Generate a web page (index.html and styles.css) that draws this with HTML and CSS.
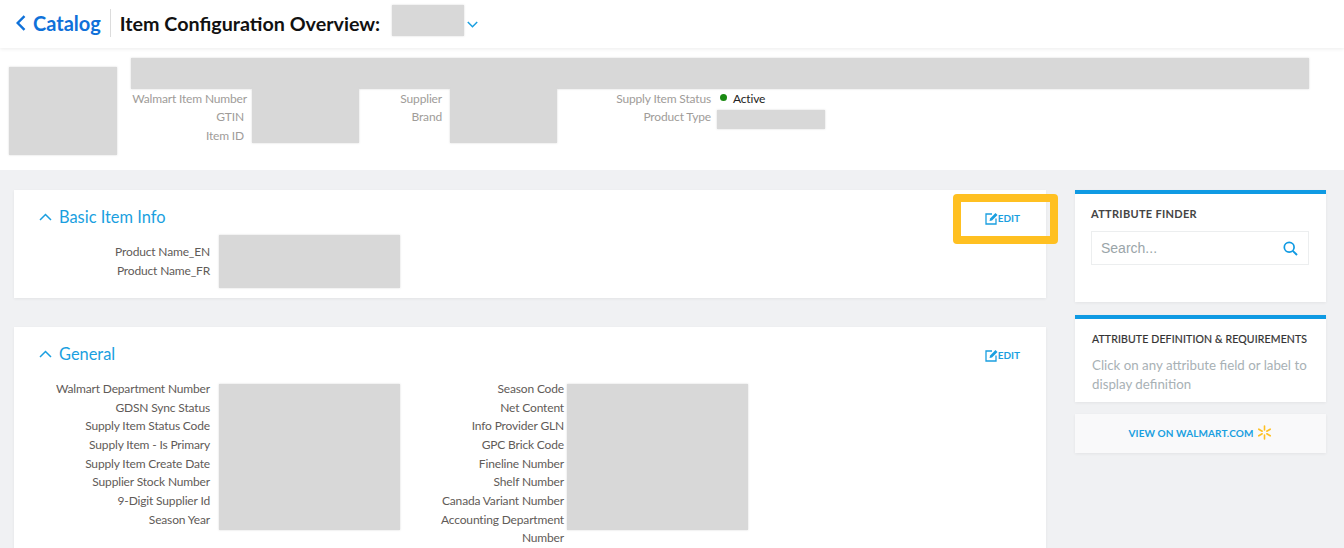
FILE: index.html
```html
<!DOCTYPE html>
<html lang="en">
<head>
    <meta charset="UTF-8">
    <title>Item Configuration Overview</title>
    <link rel="stylesheet" href="styles.css">
</head>
<body>
    <div class="topbar">
        <a class="back">
            <svg class="back-icon" width="10" height="16" viewBox="0 0 10 16"><path d="M8.5 1.2 1.7 8l6.8 6.8" fill="none" stroke="#0f71d9" stroke-width="2.4"/></svg>
            Catalog
        </a>
        <h1 class="page-title">Item Configuration Overview:</h1>
        <div class="redact redact-select"></div>
        <svg class="select-icon" width="11" height="7" viewBox="0 0 11 7"><path d="M.8 1 5.5 5.7 10.2 1" fill="none" stroke="#1a9fe0" stroke-width="1.5"/></svg>
    </div>

    <div class="product">
        <div class="redact redact-image"></div>
        <div class="product-info">
            <div class="redact redact-name"></div>
            <div class="meta">
                <div class="meta-group meta-first">
                    <div class="meta-labels">
                        <p>Walmart Item Number</p>
                        <p class="inset">GTIN</p>
                        <p class="inset">Item ID</p>
                    </div>
                    <div class="redact redact-meta"></div>
                </div>
                <div class="meta-group meta-second">
                    <div class="meta-labels">
                        <p>Supplier</p>
                        <p>Brand</p>
                    </div>
                    <div class="redact redact-meta"></div>
                </div>
                <div class="meta-group meta-third">
                    <div class="meta-labels">
                        <p>Supply Item Status</p>
                        <p>Product Type</p>
                    </div>
                    <div class="meta-values">
                        <p class="status"><span class="dot"></span>Active</p>
                        <div class="redact redact-type"></div>
                    </div>
                </div>
            </div>
        </div>
    </div>

    <div class="content">
        <div class="main">
            <div class="card card-basic">
                <div class="card-head">
                    <svg class="toggle" width="13" height="8" viewBox="0 0 13 8"><path d="M1 7 6.500 1.500 12 7" fill="none" stroke="#1a9fe0" stroke-width="1.500"/></svg>
                    <h2>Basic Item Info</h2>
                    <a class="edit">
                        <svg width="13" height="13" viewBox="0 0 13 13"><path d="M7 2H1v10h10V6.500" fill="none" stroke="#1a9fe0" stroke-width="1.300"/><path d="M4.500 9l.6-2.600L10.500.9l2 2L7 8.400z" fill="#1a9fe0"/></svg>
                        EDIT
                    </a>
                </div>
                <div class="fields">
                    <div class="labels">
                        <p>Product Name_EN</p>
                        <p>Product Name_FR</p>
                    </div>
                    <div class="redact redact-basic"></div>
                </div>
                <div class="highlight"></div>
            </div>

            <div class="card card-general">
                <div class="card-head">
                    <svg class="toggle" width="13" height="8" viewBox="0 0 13 8"><path d="M1 7 6.500 1.500 12 7" fill="none" stroke="#1a9fe0" stroke-width="1.500"/></svg>
                    <h2>General</h2>
                    <a class="edit">
                        <svg width="13" height="13" viewBox="0 0 13 13"><path d="M7 2H1v10h10V6.500" fill="none" stroke="#1a9fe0" stroke-width="1.300"/><path d="M4.500 9l.6-2.600L10.500.9l2 2L7 8.400z" fill="#1a9fe0"/></svg>
                        EDIT
                    </a>
                </div>
                <div class="fields">
                    <div class="labels">
                        <p>Walmart Department Number</p>
                        <p>GDSN Sync Status</p>
                        <p>Supply Item Status Code</p>
                        <p>Supply Item - Is Primary</p>
                        <p>Supply Item Create Date</p>
                        <p>Supplier Stock Number</p>
                        <p>9-Digit Supplier Id</p>
                        <p>Season Year</p>
                    </div>
                    <div class="redact redact-general"></div>
                    <div class="labels labels-second">
                        <p>Season Code</p>
                        <p>Net Content</p>
                        <p>Info Provider GLN</p>
                        <p>GPC Brick Code</p>
                        <p>Fineline Number</p>
                        <p>Shelf Number</p>
                        <p>Canada Variant Number</p>
                        <p>Accounting Department Number</p>
                    </div>
                    <div class="redact redact-general redact-tight"></div>
                </div>
            </div>
        </div>

        <div class="side">
            <div class="panel panel-finder">
                <h3>ATTRIBUTE FINDER</h3>
                <div class="search">
                    <input type="text" placeholder="Search...">
                    <svg width="15" height="15" viewBox="0 0 15 15"><circle cx="6.200" cy="6.200" r="4.900" fill="none" stroke="#0f9ae3" stroke-width="1.700"/><path d="M9.800 9.800 14 14" stroke="#0f9ae3" stroke-width="1.900"/></svg>
                </div>
            </div>
            <div class="panel panel-def">
                <h3>ATTRIBUTE DEFINITION &amp; REQUIREMENTS</h3>
                <p>Click on any attribute field or label to display definition</p>
            </div>
            <a class="view-link">
                VIEW ON WALMART.COM
                <svg width="15" height="15" viewBox="0 0 15 15"><path d="M7.500 1v4M7.500 10v4M1.800 4.200l3.400 2M9.800 8.800l3.400 2M1.800 10.800l3.400-2M9.800 6.200l3.400-2" stroke="#ffc021" stroke-width="1.600" stroke-linecap="round"/></svg>
            </a>
        </div>
    </div>
</body>
</html>
```

FILE: styles.css
```css
* { margin: 0; padding: 0; box-sizing: border-box; }

html, body { height: 100%; overflow: hidden; }

body {
    background: #f0f1f3;
    font-family: Lato, "Open Sans", sans-serif;
    font-size: 12px;
    letter-spacing: -.16px;
    color: #5f5b58;
}

.redact {
    background: #d8d8d8;
    box-shadow: 0 0 2px #d8d8d8;
    flex: none;
}

/* top bar */
.topbar {
    display: flex;
    align-items: center;
    height: 48px;
    padding-bottom: 2px;
    background: #fff;
    box-shadow: 0 1px 4px rgba(0, 0, 0, .08);
    position: relative;
}
.back {
    display: flex;
    align-items: center;
    height: 28px;
    margin-left: 16px;
    padding-right: 9px;
    border-right: 1px solid #dcdcdc;
    color: #0f71d9;
    font-size: 20px;
    font-weight: 700;
    letter-spacing: 0;
}
.back-icon { margin-right: 7px; }
.page-title {
    margin-left: 9px;
    color: #111;
    font-size: 19.700px;
    font-weight: 700;
    letter-spacing: 0;
    white-space: nowrap;
}
.redact-select { width: 72px; height: 31px; margin: -6px 0 0 12px; }
.select-icon { margin: 3px 0 0 3px; }

/* product summary */
.product {
    display: flex;
    height: 122px;
    padding: 10px 0 0 9px;
    background: #fff;
}
.redact-image { width: 108px; height: 88px; margin: 9px 14px 0 0; }
.redact-name { width: 1178px; height: 31px; }
.meta { display: flex; }
.meta-group { display: flex; }
.meta-labels { line-height: 18.400px; padding-top: 1px; color: #a09c99; text-align: right; white-space: nowrap; }
.meta-labels .inset { padding-right: 3px; }
.meta-first .meta-labels { width: 116px; }
.meta-first .redact { margin-left: 5px; }
.meta-second .meta-labels { width: 83px; }
.meta-second .redact { margin-left: 8px; }
.meta-third .meta-labels { width: 154px; }
.redact-meta { width: 107px; height: 54px; }
.meta-values { margin-left: 6px; }
.status { display: flex; align-items: center; height: 19px; color: #222; padding-left: 3px; }
.dot {
    width: 7px;
    height: 7px;
    margin: -2px 6px 0 0;
    border-radius: 50%;
    background: #1a8a12;
}
.redact-type { width: 108px; height: 19px; margin-top: 2px; }

/* main area */
.content { display: flex; gap: 29px; padding: 20px 0 0 14px; }
.main { width: 1032px; flex: none; }

.card {
    position: relative;
    background: #fff;
    box-shadow: 0 1px 3px rgba(0, 0, 0, .06);
    padding: 0 0 0 25px;
}
.card-basic { height: 108px; margin-bottom: 29px; }
.card-general { height: 300px; }

.card-head { display: flex; align-items: center; height: 53px; }
.toggle { margin-right: 7px; }
.card-head h2 { color: #1a9fe0; font-size: 16.400px; font-weight: 400; letter-spacing: 0; }
.edit {
    display: flex;
    align-items: center;
    margin-left: auto;
    margin-right: 26px;
    padding-top: 3px;
    color: #1a9fe0;
    font-size: 10px;
    font-weight: 700;
    letter-spacing: 0;
}

.fields { display: flex; align-items: flex-start; }
.labels { width: 171px; line-height: 18.670px; text-align: right; }
.labels-second { width: 164px; }
.redact-basic { width: 181px; height: 53px; margin: -8px 0 0 9px; }
.redact-general { width: 181px; height: 146px; margin: 4px 0 0 9px; }
.redact-tight { margin-left: 3px; }

.highlight {
    position: absolute;
    left: 939px;
    top: 4px;
    width: 105px;
    height: 50px;
    border: 8px solid #ffc021;
    border-radius: 4px;
}

/* right column */
.side { width: 251px; flex: none; }
.panel {
    background: #fff;
    border-top: 4px solid #0f9ae3;
    box-shadow: 0 1px 3px rgba(0, 0, 0, .06);
}
.panel h3 { color: #444; font-size: 11px; font-weight: 700; letter-spacing: .3px; white-space: nowrap; }
.panel-finder { height: 112px; padding: 13px 17px 0 16px; margin-bottom: 13px; }
.panel-def { height: 87px; padding: 14px 16px 0 17px; margin-bottom: 12px; }
.panel-def h3 { font-size: 10.500px; font-weight: 400; color: #333; letter-spacing: .15px; -webkit-text-stroke: .2px #333; }
.panel-def p { margin-top: 11px; color: #a8b1b5; font-size: 13.300px; line-height: 19px; letter-spacing: 0; }

.search {
    display: flex;
    align-items: center;
    height: 34px;
    margin-top: 11px;
    padding: 0 10px 0 9px;
    border: 1px solid #eceeef;
}
.search input {
    flex: 1;
    min-width: 0;
    border: none;
    outline: none;
    font-family: "Liberation Sans", sans-serif;
    font-size: 14px;
}
.search input::placeholder { color: #9aa5a9; opacity: 1; }

.view-link {
    display: flex;
    align-items: center;
    justify-content: center;
    gap: 4px;
    height: 39px;
    padding-bottom: 2px;
    background: #f9f9fa;
    box-shadow: 0 1px 3px rgba(0, 0, 0, .06);
    color: #1a9fe0;
    font-size: 10px;
    font-weight: 700;
    letter-spacing: .1px;
}
```
